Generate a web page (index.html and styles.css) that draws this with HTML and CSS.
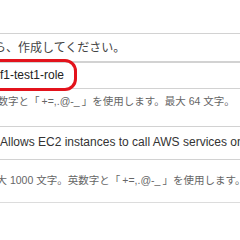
FILE: index.html
```html
<!DOCTYPE html>
<html lang="ja">
<head>
<meta charset="utf-8">
<link rel="stylesheet" href="styles.css">
</head>
<body>
<div class="page">
  <div class="box note"><span class="cut-ra">から、作成してください。</span></div>
  <div class="field">
    <div class="box input">f1-test1-role</div>
    <div class="mark"></div>
  </div>
  <div class="hint"><span class="cut-ei">英数字と「&#8201;+=,.@-_&#8201;」を使用します。最大 64 文字。</span></div>
  <div class="box area">Allows EC2 instances to call AWS services on your behalf.</div>
  <div class="hint hint2"><span class="cut-sai">最大 1000 文字。英数字と「&#8201;+=,.@-_&#8201;」を使用します。</span></div>
  <div class="rule"></div>
</div>
</body>
</html>
```
FILE: styles.css
```css
html, body {
  margin: 0;
  padding: 0;
  background: #ffffff;
  overflow: hidden;
}
body {
  width: 240px;
  height: 240px;
  font-family: "Liberation Sans", "Noto Sans CJK JP", sans-serif;
}
.page {
  padding-top: 33px;
  display: flex;
  flex-direction: column;
  width: 300px;
}
.box {
  box-sizing: border-box;
  border-top: 1px solid #d2d2d2;
  border-bottom: 1px solid #d2d2d2;
  white-space: nowrap;
  overflow: hidden;
  color: #333333;
  font-size: 12px;
}
.note {
  height: 29px;
  line-height: 28px;
  color: #444444;
}
.field {
  position: relative;
}
.input {
  height: 27px;
  line-height: 25px;
  color: #222222;
}
.mark {
  position: absolute;
  left: -24px;
  top: -3px;
  width: 95px;
  height: 26px;
  border: 3px solid #e3131c;
  border-radius: 12px;
}
.hint {
  white-space: nowrap;
  overflow: hidden;
  font-size: 10.5px;
  color: #666666;
  height: 37px;
  line-height: 24px;
}
.hint2 {
  height: 42px;
  line-height: 40px;
}
.area {
  height: 34px;
  line-height: 31px;
}
.rule {
  border-top: 1px solid #dcdcdc;
}
.cut-ra {
  display: inline-block;
  margin-left: -18px;
}
.cut-ei {
  display: inline-block;
  margin-left: -13px;
}
.cut-sai {
  display: inline-block;
  margin-left: -14px;
}
```
